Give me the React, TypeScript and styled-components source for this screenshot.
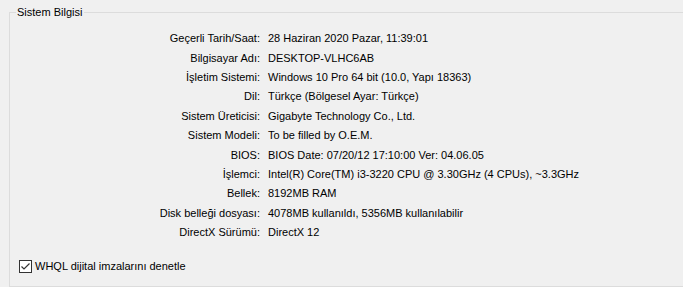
import React from "react";
import styled, { createGlobalStyle } from "styled-components";

const Global = createGlobalStyle`
  html, body { margin: 0; padding: 0; background: #f0f0f0; overflow: hidden; }
  body { font-family: "Liberation Sans", Arial, sans-serif; font-size: 11px; color: #000; }
`;

const Page = styled.div`
  width: 683px;
  height: 287px;
  overflow: hidden;
  padding-top: 5px;
  box-sizing: border-box;
`;

const GroupBox = styled.fieldset`
  margin: 0 -20px 0 9px;
  padding: 0;
  border: 1px solid #dcdcdc;
  height: 282px;
  box-sizing: border-box;
  display: flex;
  flex-direction: column;
  min-width: 0;
`;

const Legend = styled.legend`
  margin-left: 6px;
  padding: 0 2px 0 1px;
  line-height: 14px;
  font-size: 11px;
`;

const InfoGrid = styled.div`
  display: grid;
  grid-template-columns: 250px 1fr;
  column-gap: 8px;
  grid-auto-rows: 19.4px;
  align-items: center;
  margin-top: 10px;
  line-height: 13px;
`;

const Label = styled.div`
  text-align: right;
  white-space: nowrap;
`;

const Value = styled.div`
  white-space: nowrap;
`;

const CheckRow = styled.label`
  display: flex;
  align-items: center;
  gap: 3px;
  margin: 18px 0 0 9px;
  line-height: 13px;
`;

const Box = styled.span`
  width: 13px;
  height: 13px;
  box-sizing: border-box;
  border: 1px solid #333;
  background: #fff;
  display: flex;
  align-items: center;
  justify-content: center;
`;

const rows: [string, string][] = [
  ["Geçerli Tarih/Saat:", "28 Haziran 2020 Pazar, 11:39:01"],
  ["Bilgisayar Adı:", "DESKTOP-VLHC6AB"],
  ["İşletim Sistemi:", "Windows 10 Pro 64 bit (10.0, Yapı 18363)"],
  ["Dil:", "Türkçe (Bölgesel Ayar: Türkçe)"],
  ["Sistem Üreticisi:", "Gigabyte Technology Co., Ltd."],
  ["Sistem Modeli:", "To be filled by O.E.M."],
  ["BIOS:", "BIOS Date: 07/20/12 17:10:00 Ver: 04.06.05"],
  ["İşlemci:", "Intel(R) Core(TM) i3-3220 CPU @ 3.30GHz (4 CPUs), ~3.3GHz"],
  ["Bellek:", "8192MB RAM"],
  ["Disk belleği dosyası:", "4078MB kullanıldı, 5356MB kullanılabilir"],
  ["DirectX Sürümü:", "DirectX 12"],
];

export default function App() {
  return (
    <Page>
      <Global />
      <GroupBox>
        <Legend>Sistem Bilgisi</Legend>
        <InfoGrid>
          {rows.map(([l, v]) => (
            <React.Fragment key={l}>
              <Label>{l}</Label>
              <Value>{v}</Value>
            </React.Fragment>
          ))}
        </InfoGrid>
        <CheckRow>
          <Box>
            <svg width="11" height="11" viewBox="0 0 11 11">
              <path d="M1.5 5.5 L4 8 L9.5 2.5" fill="none" stroke="#333" strokeWidth="1.2" />
            </svg>
          </Box>
          <span>WHQL dijital imzalarını denetle</span>
        </CheckRow>
      </GroupBox>
    </Page>
  );
}
